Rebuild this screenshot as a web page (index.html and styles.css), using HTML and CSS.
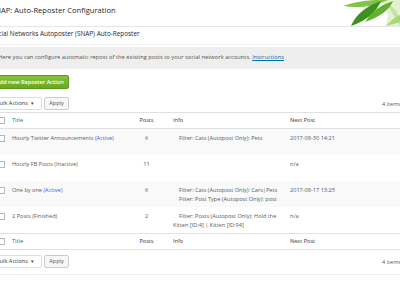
FILE: index.html
```html
<!DOCTYPE html>
<html lang="en">
<head>
<meta charset="UTF-8" />
<title>SNAP: Auto-Reposter Configuration</title>
<link rel="stylesheet" href="styles.css">
</head>
<body>
<div class="wrap">
  <div class="page-head">
    <h1>SNAP: Auto-Reposter Configuration</h1>
    <svg class="leaf" viewBox="0 0 57 26" width="57" height="26">
      <path d="M36 0 L57 0 L57 26 L42 26 Q50 12 36 0Z" fill="#e2f2d0" />
      <path d="M44 4 Q54 8 57 20 L57 26 Q50 14 44 4Z" fill="#c4e3a0" />
      <path d="M0 6 Q18 -1 45 0 Q24 10 0 6Z" fill="#82c444" />
      <path d="M8 26 Q15 9 38 1 Q31 18 8 26Z" fill="#3d921f" />
      <path d="M22 22 Q31 7 50 1 Q45 14 22 22Z" fill="#62b12e" />
      <path d="M43 26 Q50 18 57 15 L57 22 Q51 24 43 26Z" fill="#a9d87a" />
    </svg>
  </div>

  <div class="box-title">Social Networks Autoposter (SNAP) Auto-Reposter</div>
  <div class="notice">Here you can configure automatic repost of the existing posts to your social network accounts. <a href="#">Instructions</a></div>

  <div class="btn-add">Add new Reposter Action</div>

  <div class="tablenav">
    <div class="bulk">Bulk Actions <span class="arrow">&#9662;</span></div>
    <div class="apply">Apply</div>
    <div class="count">4 items</div>
  </div>

  <table class="list">
    <colgroup>
      <col class="c-cb"><col class="c-title"><col class="c-posts"><col class="c-info"><col class="c-next">
    </colgroup>
    <thead>
      <tr>
        <th class="cb"><span class="box"></span></th>
        <th class="title"><a href="#">Title</a></th>
        <th class="posts">Posts</th>
        <th class="info">Info</th>
        <th class="next">Next Post</th>
      </tr>
    </thead>
    <tbody>
      <tr class="alt">
        <td class="cb"><span class="box"></span></td>
        <td class="title">Hourly Twitter Announcements <span class="active">(Active)</span><div class="row-actions"></div></td>
        <td class="posts">6</td>
        <td class="info"><div class="filter">Filter: Cats (Autopost Only): Pets</div></td>
        <td class="next">2017-08-30 14:21</td>
      </tr>
      <tr>
        <td class="cb"><span class="box"></span></td>
        <td class="title">Hourly FB Posts (Inactive)<div class="row-actions"></div></td>
        <td class="posts">11</td>
        <td class="info"></td>
        <td class="next">n/a</td>
      </tr>
      <tr class="alt">
        <td class="cb"><span class="box"></span></td>
        <td class="title">One by one <span class="active">(Active)</span><div class="row-actions"></div></td>
        <td class="posts">6</td>
        <td class="info"><div class="filter">Filter: Cats (Autopost Only): Cars|Pets</div><div class="filter">Filter: Post Type (Autopost Only): post</div></td>
        <td class="next">2017-08-17 13:25</td>
      </tr>
      <tr>
        <td class="cb"><span class="box"></span></td>
        <td class="title">2 Posts (Finished)<div class="row-actions"></div></td>
        <td class="posts">2</td>
        <td class="info"><div class="filter">Filter: Posts (Autopost Only): Hold the Kitten [ID:4] | Kitten [ID:94]</div></td>
        <td class="next">n/a</td>
      </tr>
    </tbody>
    <tfoot>
      <tr>
        <th class="cb"><span class="box"></span></th>
        <th class="title"><a href="#">Title</a></th>
        <th class="posts">Posts</th>
        <th class="info">Info</th>
        <th class="next">Next Post</th>
      </tr>
    </tfoot>
  </table>

  <div class="tablenav bottom">
    <div class="bulk">Bulk Actions <span class="arrow">&#9662;</span></div>
    <div class="apply">Apply</div>
    <div class="count">4 items</div>
  </div>
  <div class="end-line"></div>
</div>
</body>
</html>
```

FILE: styles.css
```css
/* Base */
* {
  box-sizing: border-box;
}
body {
  margin: 0;
  background: #fff;
  font-family: 'Open Sans', 'Noto Sans', sans-serif;
  font-size: 5.6px;
  color: #5a5a5a;
  overflow: hidden;
}
a {
  color: #0073aa;
  text-decoration: none;
}
/* The page is cropped: the wrap starts a bit left of the window */
.wrap {
  margin-left: -9px;
  width: 412px;
}
/* Header with leaves */
.page-head {
  display: flex;
  justify-content: space-between;
  height: 27px;
  border-bottom: 1px solid #e5e5e5;
}
.page-head h1 {
  margin: 0;
  padding-top: 5px;
  font-size: 7.6px;
  line-height: 10px;
  font-weight: 400;
  color: #23282d;
}
.leaf {
  margin-right: 3px;
}
.box-title {
  height: 18px;
  line-height: 14px;
  font-size: 6.4px;
  color: #23282d;
  border-bottom: 1px solid #eee;
}
.notice {
  margin-top: 2px;
  height: 22px;
  padding: 6px 0 0 7px;
  line-height: 9px;
  font-size: 5.75px;
  background: #eee;
  color: #555;
}
.notice a {
  text-decoration: underline;
}
/* Green button */
.btn-add {
  display: inline-block;
  margin-top: 6px;
  height: 14px;
  padding: 0 4px;
  line-height: 12px;
  font-weight: 600;
  color: #fff;
  background: linear-gradient(#86c43a, #6aa823);
  border: 1px solid #5e9a1c;
  border-radius: 2px;
}
/* Bulk actions bar */
.tablenav {
  display: flex;
  align-items: center;
  margin-top: 8px;
  height: 13px;
}
.tablenav.bottom {
  margin-top: 5px;
}
.bulk {
  width: 51px;
  height: 13px;
  padding: 0 4px;
  line-height: 11px;
  border: 1px solid #ddd;
  border-radius: 2px;
  color: #32373c;
  background: #fff;
}
.bulk .arrow {
  font-size: 5px;
  margin-left: 2px;
}
.apply {
  margin-left: 2px;
  width: 25px;
  height: 13px;
  line-height: 11px;
  text-align: center;
  color: #555;
  background: #f7f7f7;
  border: 1px solid #ccc;
  border-radius: 2px;
}
.count {
  margin-left: auto;
  padding-right: 2px;
}
/* List table */
.list {
  margin-top: 2px;
  width: 412px;
  table-layout: fixed;
  border-collapse: collapse;
  border-top: 1px solid #e1e1e1;
  border-bottom: 1px solid #e1e1e1;
}
.c-cb { width: 17px; }
.c-title { width: 124px; }
.c-posts { width: 29px; }
.c-info { width: 125px; }
.c-next { width: 117px; }
.list th {
  height: 16px;
  padding: 3px 0;
  line-height: 9px;
  font-weight: 400;
  text-align: left;
  color: #32373c;
}
.list thead th {
  border-bottom: 1px solid #e1e1e1;
}
.list tfoot th {
  border-top: 1px solid #e1e1e1;
}
.list td {
  padding: 5px 0 3px;
  line-height: 9px;
  vertical-align: top;
}
.list tr.alt td {
  background: #f9f9f9;
}
.list .cb {
  padding-left: 7px;
}
.box {
  display: inline-block;
  width: 7px;
  height: 7px;
  border: 1px solid #b4b9be;
  background: #fff;
  vertical-align: middle;
}
.list .title {
  padding-left: 4px;
}
.list .posts {
  text-align: center;
}
.list .info {
  padding-left: 12px;
  padding-right: 2px;
}
.filter {
  text-indent: 6px;
}
.list .next {
  padding-left: 4px;
}
.active {
  color: #4a55d8;
}
.row-actions {
  height: 9px;
}
.end-line {
  margin-top: 6px;
  border-top: 1px solid #eee;
}
```
